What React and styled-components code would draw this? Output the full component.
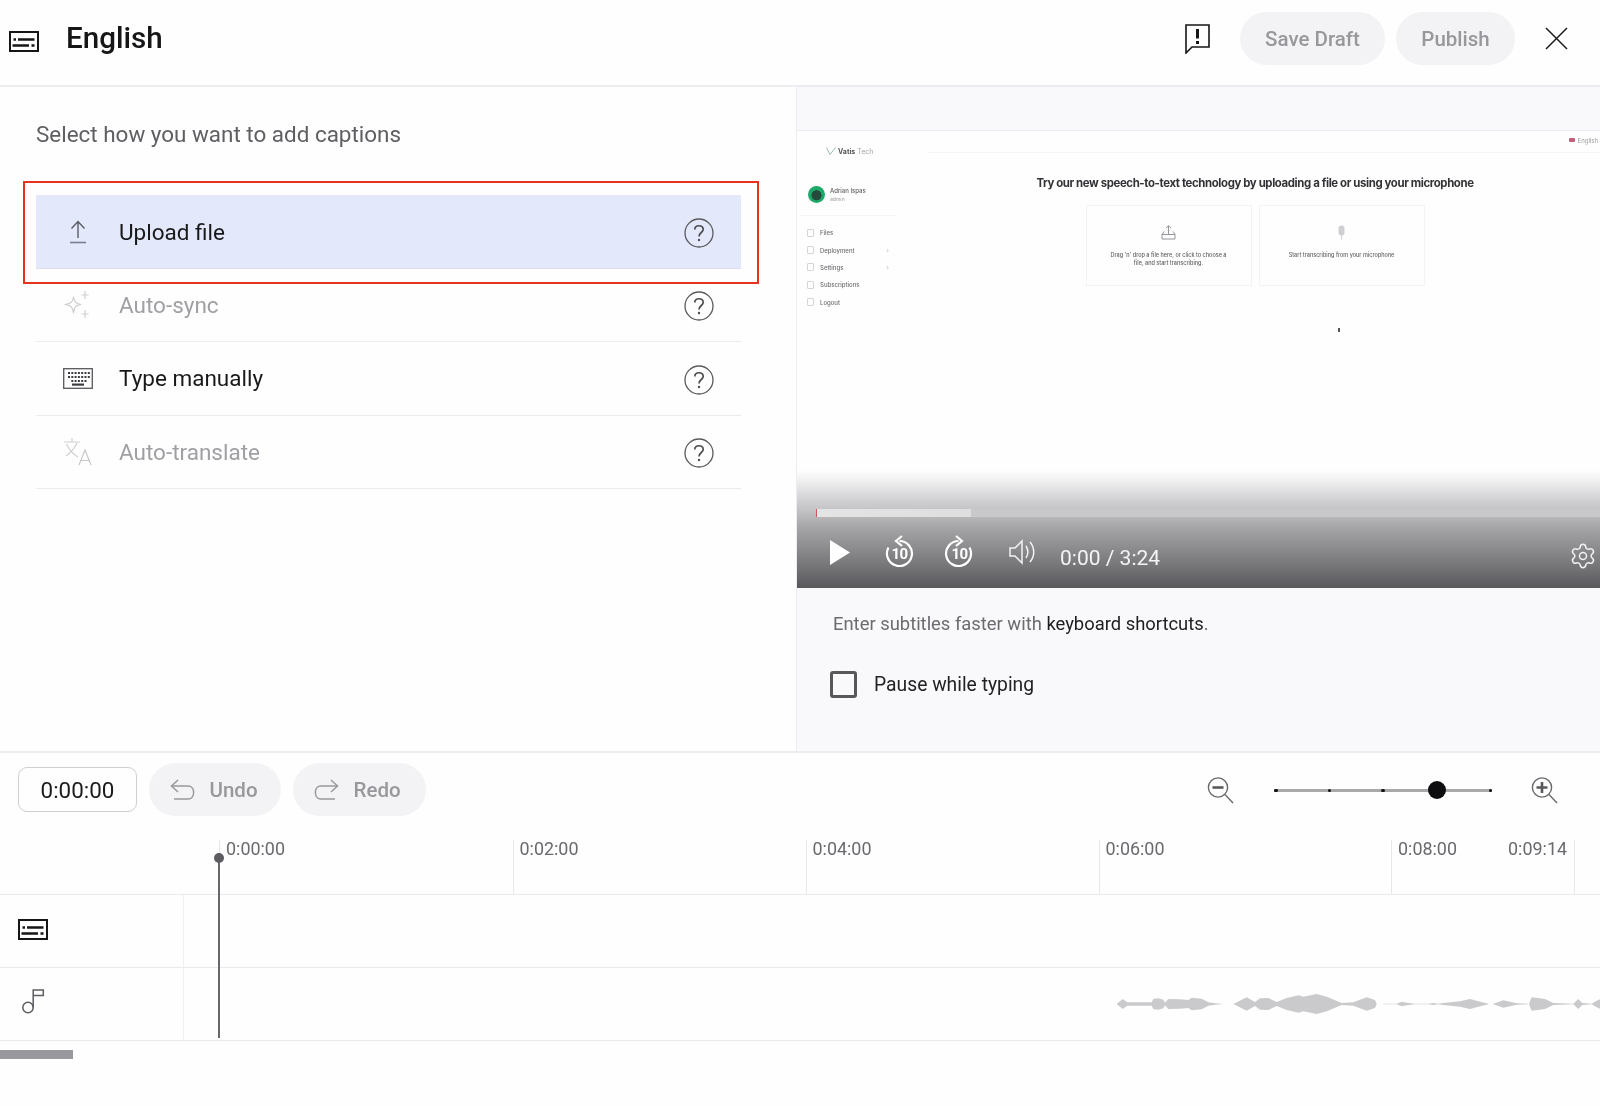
import React from "react";
import styled, { createGlobalStyle } from "styled-components";
import { Settings } from "lucide-react";

const Global = createGlobalStyle`
  html, body { margin: 0; padding: 0; background: #fefefe; }
  body { font-family: Roboto, "Liberation Sans", sans-serif; color: #1b1b1d; }
  * { box-sizing: border-box; }
`;

const Page = styled.div`
  width: 1600px;
  height: 1106px;
  overflow: hidden;
  display: flex;
  flex-direction: column;
  background: #fefefe;
  filter: blur(0.4px);
`;

/* Header */
const Header = styled.header`
  height: 87px;
  flex: none;
  display: flex;
  align-items: center;
  padding: 0 32px 8px 9px;
  border-bottom: 2px solid #eeecf0;
`;
const HeaderIcon = styled.div`
  display: flex;
  margin-top: 5px;
`;
const Title = styled.h1`
  margin: 0 auto 0 27px;
  padding-top: 1px;
  font-size: 29.6px;
  font-weight: 500;
  color: #161618;
  line-height: 1;
`;
const Pill = styled.button`
  height: 53px;
  width: ${(p) => p.$w}px;
  margin-left: ${(p) => p.$ml || 0}px;
  border: 0;
  border-radius: 27px;
  background: #f3f2f5;
  color: #98979b;
  font-family: inherit;
  font-size: 20.5px;
  font-weight: 500;
  display: flex;
  align-items: center;
  justify-content: ${(p) => (p.$tool ? "flex-start" : "center")};
  gap: 14.5px;
  padding: ${(p) => (p.$tool ? "0 0 0 21px" : "0")};
  flex: none;
`;
const CloseSlot = styled.div`
  margin-left: 30px;
  display: flex;
`;

/* Main */
const Main = styled.main`
  flex: none;
  height: 666px;
  display: flex;
  border-bottom: 2px solid #eeecf0;
`;
const LeftPanel = styled.section`
  width: 797px;
  flex: none;
  border-right: 1.5px solid #eeecf0;
  padding: 33px 0 0 36px;
`;
const Prompt = styled.p`
  margin: 0 0 47px;
  font-size: 22.45px;
  line-height: 28px;
  color: #5f5e62;
`;
const Options = styled.div`
  width: 705px;
  display: flex;
  flex-direction: column;
`;
const Option = styled.div`
  position: relative;
  height: ${(p) => (p.$active ? 73.8 : 73.4)}px;
  display: flex;
  align-items: center;
  padding-right: 27px;
  border-bottom: 1.5px solid #ebeaed;
  background: ${(p) => (p.$active ? "#e3e9fa" : "transparent")};
  color: ${(p) => (p.$muted ? "#a09fa3" : "#19191b")};
  ${(p) => p.$active && "border-top: 1px solid #e6e8f2; border-bottom-color: #dbdfee;"}
`;
const OptionIcon = styled.div`
  width: 83px;
  padding-left: 27px;
  display: flex;
  flex: none;
`;
const IconBox = styled.div`
  width: 30px;
  display: flex;
  justify-content: center;
  align-items: center;
`;
const OptionLabel = styled.span`
  flex: 1;
  font-size: 22.5px;
  line-height: 28px;
`;
const HelpSlot = styled.div`
  display: flex;
  margin-top: 3px;
`;
const RedFrame = styled.div`
  position: absolute;
  left: -13px;
  right: -18px;
  top: -15px;
  bottom: -16px;
  border: 2.5px solid #e8331c;
  pointer-events: none;
`;

const RightPanel = styled.section`
  flex: 1;
  min-width: 0;
  background: #f9f8fb;
  display: flex;
  flex-direction: column;
`;
const TopBand = styled.div`
  height: 44px;
  flex: none;
  border-bottom: 1.5px solid #eeecf0;
`;
const Video = styled.div`
  position: relative;
  height: 457px;
  flex: none;
  background: #fefefe;
  overflow: hidden;
`;

/* Recorded screen inside the video */
const ScreenTop = styled.div`
  display: flex;
  align-items: center;
  height: 22px;
  border-bottom: 1px solid #f4f4f6;
  margin-left: 130px;
  justify-content: flex-end;
  padding: 0 2px 3px 0;
  gap: 3px;
  font-family: Inter, sans-serif;
  font-size: 6px;
  color: #9b9b9f;
  filter: blur(0.4px);
`;
const Flag = styled.i`
  width: 6px;
  height: 4px;
  background: #c2607a;
  border-radius: 1px;
`;
const Screen = styled.div`
  display: flex;
  margin-top: -22px;
  height: 435px;
  font-family: Inter, sans-serif;
`;
const Side = styled.aside`
  width: 104px;
  flex: none;
  padding: 14px 4px 0 4px;
  filter: blur(0.35px);
`;
const Logo = styled.div`
  display: flex;
  align-items: center;
  gap: 2px;
  padding-left: 25px;
  font-size: 7px;
  font-weight: 700;
  color: #55555a;
  height: 12px;
  span { font-weight: 400; color: #a5a5a9; }
`;
const Profile = styled.div`
  display: flex;
  align-items: center;
  gap: 5px;
  margin-top: 29px;
  padding: 0 0 12px 7px;
  border-bottom: 1px solid #f4f4f6;
`;
const Avatar = styled.div`
  width: 17px;
  height: 17px;
  border-radius: 50%;
  background: radial-gradient(circle at 50% 55%, #244a3c 0 38%, #1fa968 42%);
  flex: none;
`;
const ProfileName = styled.div`
  font-size: 6px;
  font-weight: 500;
  color: #5e5e62;
  line-height: 8px;
  small { display: block; font-size: 5px; color: #a8a8ac; }
`;
const Menu = styled.div`
  display: flex;
  flex-direction: column;
  margin-top: 8px;
`;
const MenuItem = styled.div`
  height: 17.4px;
  display: flex;
  align-items: center;
  padding: 0 8px 0 6px;
  font-size: 6px;
  font-weight: 500;
  color: #6f6f74;
  gap: 6px;
  i { width: 7px; height: 8px; border: 1px solid #d5d5d8; border-radius: 1px; flex: none; }
  b { margin-left: auto; font-weight: 400; color: #c0c0c4; font-size: 7px; }
`;
const ScreenBody = styled.div`
  flex: 1;
  display: flex;
  flex-direction: column;
  align-items: center;
  padding: 45px 0 0 0;
  position: relative;
`;
const Heading = styled.div`
  font-size: 11.4px;
  font-weight: 700;
  letter-spacing: -0.38px;
  color: #333337;
  line-height: 14px;
  filter: blur(0.25px);
  white-space: nowrap;
  margin-left: 9px;
`;
const Cards = styled.div`
  display: flex;
  gap: 7px;
  margin: 15px 0 0 9px;
`;
const Card = styled.div`
  width: 166px;
  height: 81px;
  border: 1px solid #f3f3f6;
  display: flex;
  flex-direction: column;
  align-items: center;
  padding-top: 19px;
  font-size: 5.5px;
  font-weight: 500;
  line-height: 8px;
  text-align: center;
  color: #626266;
  filter: blur(0.3px);
  svg { margin-bottom: 11px; }
`;
const Cursor = styled.div`
  width: 2px;
  height: 4px;
  background: #555;
  margin: 42px 0 0 176px;
`;

/* Player overlay */
const Player = styled.div`
  position: absolute;
  left: 0;
  right: 0;
  bottom: 0;
  height: 118px;
  display: flex;
  flex-direction: column;
  justify-content: flex-end;
  background: linear-gradient(
    180deg,
    rgba(250, 250, 251, 0) 0,
    #f2f2f3 8%,
    #dbdbdd 20%,
    #c3c3c5 34%,
    #a6a6a8 48%,
    #8f8f91 64%,
    #727174 84%,
    #58575b 100%
  );
`;
const Progress = styled.div`
  height: 8px;
  margin-left: 19px;
  background: #c8c8ca;
  display: flex;
  flex: none;
`;
const Played = styled.div`
  width: 155px;
  background: linear-gradient(90deg, #e4e4e5, #dedede);
  border-left: 1.5px solid #d9555f;
`;
const Controls = styled.div`
  height: 71px;
  flex: none;
  display: flex;
  align-items: flex-start;
  padding: 18px 0 0 33px;
  color: #fff;
`;
const ControlIcon = styled.div`
  margin-left: ${(p) => p.$ml || 0}px;
  margin-top: ${(p) => p.$mt || 0}px;
  display: flex;
  flex: none;
`;
const Time = styled.span`
  margin-left: 22px;
  margin-top: 11px;
  font-size: 21px;
  line-height: 24px;
  color: #f4f4f5;
`;
const Gear = styled.div`
  margin: 7px 3px 0 auto;
  display: flex;
  color: #f0f0f1;
`;

const Help = styled.div`
  padding: 24px 36px 0;
  font-size: 18.4px;
  line-height: 24px;
  color: #6c6b70;
  strong { font-weight: 400; color: #1d1d20; }
`;
const PauseRow = styled.label`
  display: flex;
  align-items: center;
  gap: 17px;
  margin: 35px 0 0 33px;
  font-size: 19.3px;
  line-height: 26px;
  color: #222225;
`;
const Check = styled.span`
  width: 27px;
  height: 27px;
  border: 3px solid #58585c;
  border-radius: 3px;
  flex: none;
`;

/* Timeline */
const Toolbar = styled.div`
  height: 75px;
  flex: none;
  display: flex;
  align-items: center;
  padding: 0 42px 0 18px;
`;
const EditGroup = styled.div`
  display: flex;
  align-items: center;
  gap: 12px;
  margin-bottom: 2px;
`;
const TimeBox = styled.div`
  width: 119px;
  height: 45px;
  border: 1.5px solid #cfcfd3;
  border-radius: 9px;
  font-size: 22.4px;
  display: flex;
  align-items: center;
  justify-content: center;
  color: #1b1b1d;
`;
const ZoomGroup = styled.div`
  margin-left: auto;
  display: flex;
  align-items: center;
`;
const Slider = styled.div`
  position: relative;
  width: 218px;
  height: 3px;
  margin: 0 39px 0 40px;
  background: #a9a9ac;
  display: flex;
  align-items: center;
  justify-content: space-between;
`;
const Dot = styled.i`
  width: 3.5px;
  height: 3.5px;
  background: #111;
  border-radius: 50%;
  margin-right: ${(p) => p.$mr || 0}px;
`;
const Thumb = styled.div`
  position: absolute;
  left: 154px;
  top: -8px;
  width: 18px;
  height: 18px;
  border-radius: 50%;
  background: #0e0e10;
`;

const Timeline = styled.div`
  position: relative;
  flex: none;
`;
const Ruler = styled.div`
  height: 67px;
  display: flex;
  align-items: flex-end;
  padding-left: 219px;
  border-bottom: 1.5px solid #eaeaed;
`;
const Segment = styled.div`
  width: ${(p) => p.$w}px;
  height: 54px;
  flex: none;
  display: flex;
  justify-content: space-between;
  padding: 2px 7px 0 6px;
  border-left: 1.5px solid #e8e8eb;
  ${(p) => p.$end && "border-right: 1.5px solid #e8e8eb;"}
  font-size: 17.9px;
  line-height: 13px;
  color: #6a696e;
`;
const Track = styled.div`
  height: 73px;
  display: flex;
  border-bottom: 1.5px solid #eaeaed;
`;
const TrackHead = styled.div`
  width: 184px;
  flex: none;
  display: flex;
  align-items: center;
  padding-left: ${(p) => p.$pl}px;
  padding-bottom: ${(p) => p.$pb}px;
  border-right: 1.5px solid #f0eff2;
`;
const TrackBody = styled.div`
  flex: 1;
  min-width: 0;
  display: flex;
  align-items: center;
  justify-content: flex-end;
`;
const Playhead = styled.div`
  position: absolute;
  left: 218px;
  top: 25px;
  bottom: 3px;
  width: 2px;
  background: #68676b;
  &::before {
    content: "";
    position: absolute;
    left: -4px;
    top: 0;
    width: 10px;
    height: 10px;
    border-radius: 50%;
    background: #5d5c60;
  }
`;
const ScrollThumb = styled.div`
  width: 73px;
  height: 9px;
  margin-top: 9px;
  flex: none;
  background: #99989c;
`;

/* Icons */
const SubtitlesIcon = () => (
  <svg width="30" height="21" viewBox="0 0 30 21" fill="none">
    <rect x="1" y="1" width="28" height="19" stroke="#161618" strokeWidth="2" />
    <path d="M4.5 8.5H7M9 8.5H25.5M3.5 14.5H20M22.5 14.5H25.5" stroke="#161618" strokeWidth="2.4" />
  </svg>
);
const FeedbackIcon = () => (
  <svg width="25" height="30" viewBox="0 0 25 30" fill="none">
    <path d="M1 1H24V23H7L1 29Z" stroke="#161618" strokeWidth="1.6" />
    <path d="M12.5 5V14.5M12.5 17V20" stroke="#161618" strokeWidth="3" />
  </svg>
);
const CloseIcon = () => (
  <svg width="23" height="23" viewBox="0 0 23 23" fill="none">
    <path d="M1 1L22 22M22 1L1 22" stroke="#1b1b1d" strokeWidth="1.5" />
  </svg>
);
const UploadIcon = () => (
  <svg width="18" height="24" viewBox="0 0 18 24" fill="none">
    <path d="M9 18V2M2.5 8.5L9 1.5L15.5 8.5" stroke="#5b5c66" strokeWidth="1.4" />
    <path d="M1 22.5H17" stroke="#7c7e8d" strokeWidth="1.6" />
  </svg>
);
const SparkIcon = () => (
  <svg width="28" height="27" viewBox="0 0 28 27" fill="none" stroke="#cfcfd2" strokeWidth="1.2" strokeLinejoin="round">
    <path d="M9.5 6C10.4 11 11.5 12.4 17 13.5C11.5 14.6 10.4 16 9.5 22C8.6 16 7.5 14.6 1 13.5C7.5 12.4 8.6 11 9.5 6Z" />
    <path d="M21 0V8M17.5 4H24.5" />
    <path d="M21 19V27M17.5 23H24.5" />
  </svg>
);
const KeyboardIcon = () => (
  <svg width="30" height="21" viewBox="0 0 30 21" fill="none">
    <rect x="0.7" y="0.7" width="28.6" height="19.6" stroke="#58585c" strokeWidth="1.3" />
    {[4, 8, 12].map((y) =>
      [5, 8.3, 11.6, 14.9, 18.2, 21.5, 24.8].slice(y === 12 ? 1 : 0, y === 12 ? 6 : 7).map((x) => (
        <rect key={`${x}-${y}`} x={x} y={y} width="2" height="2" fill="#3c3c40" />
      ))
    )}
    <rect x="9" y="15.5" width="12" height="2.2" fill="#3c3c40" />
  </svg>
);
const TranslateIcon = () => (
  <svg width="30" height="28" viewBox="0 0 30 28" fill="none" stroke="#d0d0d3" strokeWidth="1.2">
    <path d="M1 4H17M9 0V4M3 18C8 14 12 10 14 5M3.5 6C6 12 10 16 15 19" />
    <path d="M16 27L22 12L28 27M18 22.5H26" stroke="#c8c8cc" />
  </svg>
);
const HelpIcon = () => (
  <svg width="30" height="30" viewBox="0 0 30 30" fill="none">
    <circle cx="15" cy="15" r="14" stroke="#5a5a5e" strokeWidth="1.3" />
    <path d="M10.8 11.5C10.8 6.5 19.2 6.5 19.2 11.5C19.2 14.5 15 14.6 15 18.5" stroke="#4e4e52" strokeWidth="1.7" />
    <circle cx="15" cy="22" r="1.2" fill="#4e4e52" />
  </svg>
);
const PlayIcon = () => (
  <svg width="20" height="25" viewBox="0 0 20 25">
    <path d="M0 0L20 12.5L0 25Z" fill="#fff" />
  </svg>
);
const SkipIcon = ({ forward }) => (
  <svg width="30" height="32" viewBox="0 0 30 32" fill="none" stroke="#fff" strokeWidth="2.2">
    <g transform={forward ? "translate(30 0) scale(-1 1)" : undefined}>
      <path d="M15.5 6A12.5 12.5 0 1 1 4.5 12.5" />
      <path d="M18 1L12 6L18 11" />
    </g>
    <text x="15.5" y="23.5" textAnchor="middle" fontFamily="Roboto, sans-serif" fontWeight="700" fontSize="15" fill="#fff" stroke="none" letterSpacing="-0.5">10</text>
  </svg>
);
const VolumeIcon = () => (
  <svg width="29" height="28" viewBox="0 0 29 28" fill="none" stroke="#f2f2f3" strokeWidth="1.5">
    <path d="M1 10H6L13 3V25L6 18H1Z" />
    <path d="M17 8C19.5 12 19.5 16 17 20M21 4C26 10 26 18 21 24" />
  </svg>
);
const UndoIcon = ({ redo }) => (
  <svg width="25" height="21" viewBox="0 0 25 21" fill="none" stroke="#99989c" strokeWidth="1.5">
    <g transform={redo ? "translate(25 0) scale(-1 1)" : undefined}>
      <path d="M8 1L1.5 7L8 13" />
      <path d="M1.5 7H18C25.5 7 25.5 20 18 20H4" />
    </g>
  </svg>
);
const ZoomIcon = ({ plus }) => (
  <svg width="27" height="27" viewBox="0 0 27 27" fill="none" stroke="#6a696d">
    <circle cx="11" cy="10.5" r="9.6" strokeWidth="1.4" />
    <path d="M18 17.5L26 26" strokeWidth="1.4" />
    <path d={plus ? "M5.5 10.5H16.5M11 5V16" : "M5.5 10.5H16.5"} strokeWidth="2.6" stroke="#59585c" />
  </svg>
);
const MusicIcon = () => (
  <svg width="23" height="25" viewBox="0 0 23 25" fill="none" stroke="#5d5c60" strokeWidth="1.5">
    <circle cx="6" cy="18.5" r="5.2" />
    <path d="M11.2 18.5V1H21.3V6.5H11.2" />
  </svg>
);
const LogoMark = () => (
  <svg width="10" height="8" viewBox="0 0 10 8" fill="none" stroke="#8fb5a4" strokeWidth="0.9">
    <path d="M0.5 0.5L4 7.5L9.5 0.5" />
  </svg>
);
const CardUploadIcon = () => (
  <svg width="15" height="15" viewBox="0 0 15 15" fill="none" stroke="#8b8b90" strokeWidth="0.9">
    <path d="M7.5 9V1M5 3L7.5 0.8L10 3" />
    <path d="M3 6.5L1 9.5V14H14V9.5L12 6.5M1 9.5H14" />
  </svg>
);
const MicIcon = () => (
  <svg width="15" height="15" viewBox="0 0 15 15" fill="#cfcfd3">
    <rect x="4.5" y="0.5" width="6" height="10" rx="3" />
    <path d="M7 10H8V14.5H7Z" />
  </svg>
);

/* Waveform data: [x, half height] runs, in 1/3 px */
const waveRuns = [
  [[50, 0], [68, 15], [82, 5], [155, 5], [160, 15], [175, 17], [190, 13], [195, 4], [205, 15], [240, 14], [265, 12], [275, 19], [305, 16], [325, 5], [345, 2], [370, 0]],
  [[400, 0], [440, 20], [465, 6], [480, 17], [505, 18], [530, 6], [560, 18], [595, 26], [610, 22], [650, 30], [680, 22], [725, 3], [760, 5], [800, 20], [825, 12], [830, 0]],
  [[850, 1], [890, 1], [905, 7], [925, 3], [945, 1], [985, 1], [1000, 3], [1015, 1], [1030, 3], [1080, 8], [1110, 15], [1135, 8], [1165, 1]],
  [[1180, 1], [1210, 11], [1250, 2], [1285, 1]],
  [[1288, 4], [1295, 20], [1335, 15], [1360, 3], [1420, 1], [1435, 15], [1447, 3], [1475, 1], [1490, 10], [1500, 14]],
];
const toPoints = (run) =>
  [...run.map(([x, h]) => `${x},${102 - h}`), ...[...run].reverse().map(([x, h]) => `${x},${102 + h}`)].join(" ");

const Waveform = () => (
  <svg width="500" height="70" viewBox="0 0 1500 204" fill="#cac9cc">
    {waveRuns.map((run, i) => (
      <polygon key={i} points={toPoints(run)} />
    ))}
  </svg>
);

const options = [
  { label: "Upload file", icon: <UploadIcon />, active: true },
  { label: "Auto-sync", icon: <SparkIcon />, muted: true },
  { label: "Type manually", icon: <KeyboardIcon /> },
  { label: "Auto-translate", icon: <TranslateIcon />, muted: true },
];

const menu = [
  ["Files"],
  ["Deployment", true],
  ["Settings", true],
  ["Subscriptions"],
  ["Logout"],
];

export default function App() {
  return (
    <Page>
      <Global />
      <Header>
        <HeaderIcon><SubtitlesIcon /></HeaderIcon>
        <Title>English</Title>
        <FeedbackIcon />
        <Pill $w={145} $ml={30}>Save Draft</Pill>
        <Pill $w={119} $ml={11}>Publish</Pill>
        <CloseSlot><CloseIcon /></CloseSlot>
      </Header>
      <Main>
        <LeftPanel>
          <Prompt>Select how you want to add captions</Prompt>
          <Options>
            {options.map((o) => (
              <Option key={o.label} $active={o.active} $muted={o.muted}>
                <OptionIcon><IconBox>{o.icon}</IconBox></OptionIcon>
                <OptionLabel>{o.label}</OptionLabel>
                <HelpSlot><HelpIcon /></HelpSlot>
                {o.active && <RedFrame />}
              </Option>
            ))}
          </Options>
        </LeftPanel>
        <RightPanel>
          <TopBand />
          <Video>
            <ScreenTop><Flag />English</ScreenTop>
            <Screen>
              <Side>
                <Logo><LogoMark />Vatis <span>Tech</span></Logo>
                <Profile>
                  <Avatar />
                  <ProfileName>Adrian Ispas<small>admin</small></ProfileName>
                </Profile>
                <Menu>
                  {menu.map(([name, more]) => (
                    <MenuItem key={name}><i />{name}{more && <b>›</b>}</MenuItem>
                  ))}
                </Menu>
              </Side>
              <ScreenBody>
                <Heading>Try our new speech-to-text technology by uploading a file or using your microphone</Heading>
                <Cards>
                  <Card>
                    <CardUploadIcon />
                    Drag 'n' drop a file here, or click to choose a<br />file, and start transcribing.
                  </Card>
                  <Card>
                    <MicIcon />
                    Start transcribing from your microphone
                  </Card>
                </Cards>
                <Cursor />
              </ScreenBody>
            </Screen>
            <Player>
              <Progress><Played /></Progress>
              <Controls>
                <ControlIcon $mt={5}><PlayIcon /></ControlIcon>
                <ControlIcon $ml={34}><SkipIcon /></ControlIcon>
                <ControlIcon $ml={30}><SkipIcon forward /></ControlIcon>
                <ControlIcon $ml={35} $mt={3}><VolumeIcon /></ControlIcon>
                <Time>0:00 / 3:24</Time>
                <Gear><Settings size={28} strokeWidth={1.3} /></Gear>
              </Controls>
            </Player>
          </Video>
          <Help>Enter subtitles faster with <strong>keyboard shortcuts</strong>.</Help>
          <PauseRow><Check />Pause while typing</PauseRow>
        </RightPanel>
      </Main>
      <Toolbar>
        <EditGroup>
          <TimeBox>0:00:00</TimeBox>
          <Pill $w={132} $tool><UndoIcon />Undo</Pill>
          <Pill $w={133} $tool><UndoIcon redo />Redo</Pill>
        </EditGroup>
        <ZoomGroup>
          <ZoomIcon />
          <Slider>
            <Dot /><Dot /><Dot $mr={54} /><Dot />
            <Thumb />
          </Slider>
          <ZoomIcon plus />
        </ZoomGroup>
      </Toolbar>
      <Timeline>
        <Ruler>
          <Segment $w={293.5}>0:00:00</Segment>
          <Segment $w={293}>0:02:00</Segment>
          <Segment $w={293}>0:04:00</Segment>
          <Segment $w={292.5}>0:06:00</Segment>
          <Segment $w={184} $end><span>0:08:00</span><span>0:09:14</span></Segment>
        </Ruler>
        <Track>
          <TrackHead $pl={18} $pb={4}><SubtitlesIcon /></TrackHead>
          <TrackBody />
        </Track>
        <Track>
          <TrackHead $pl={22} $pb={6}><MusicIcon /></TrackHead>
          <TrackBody><Waveform /></TrackBody>
        </Track>
        <Playhead />
      </Timeline>
      <ScrollThumb />
    </Page>
  );
}
